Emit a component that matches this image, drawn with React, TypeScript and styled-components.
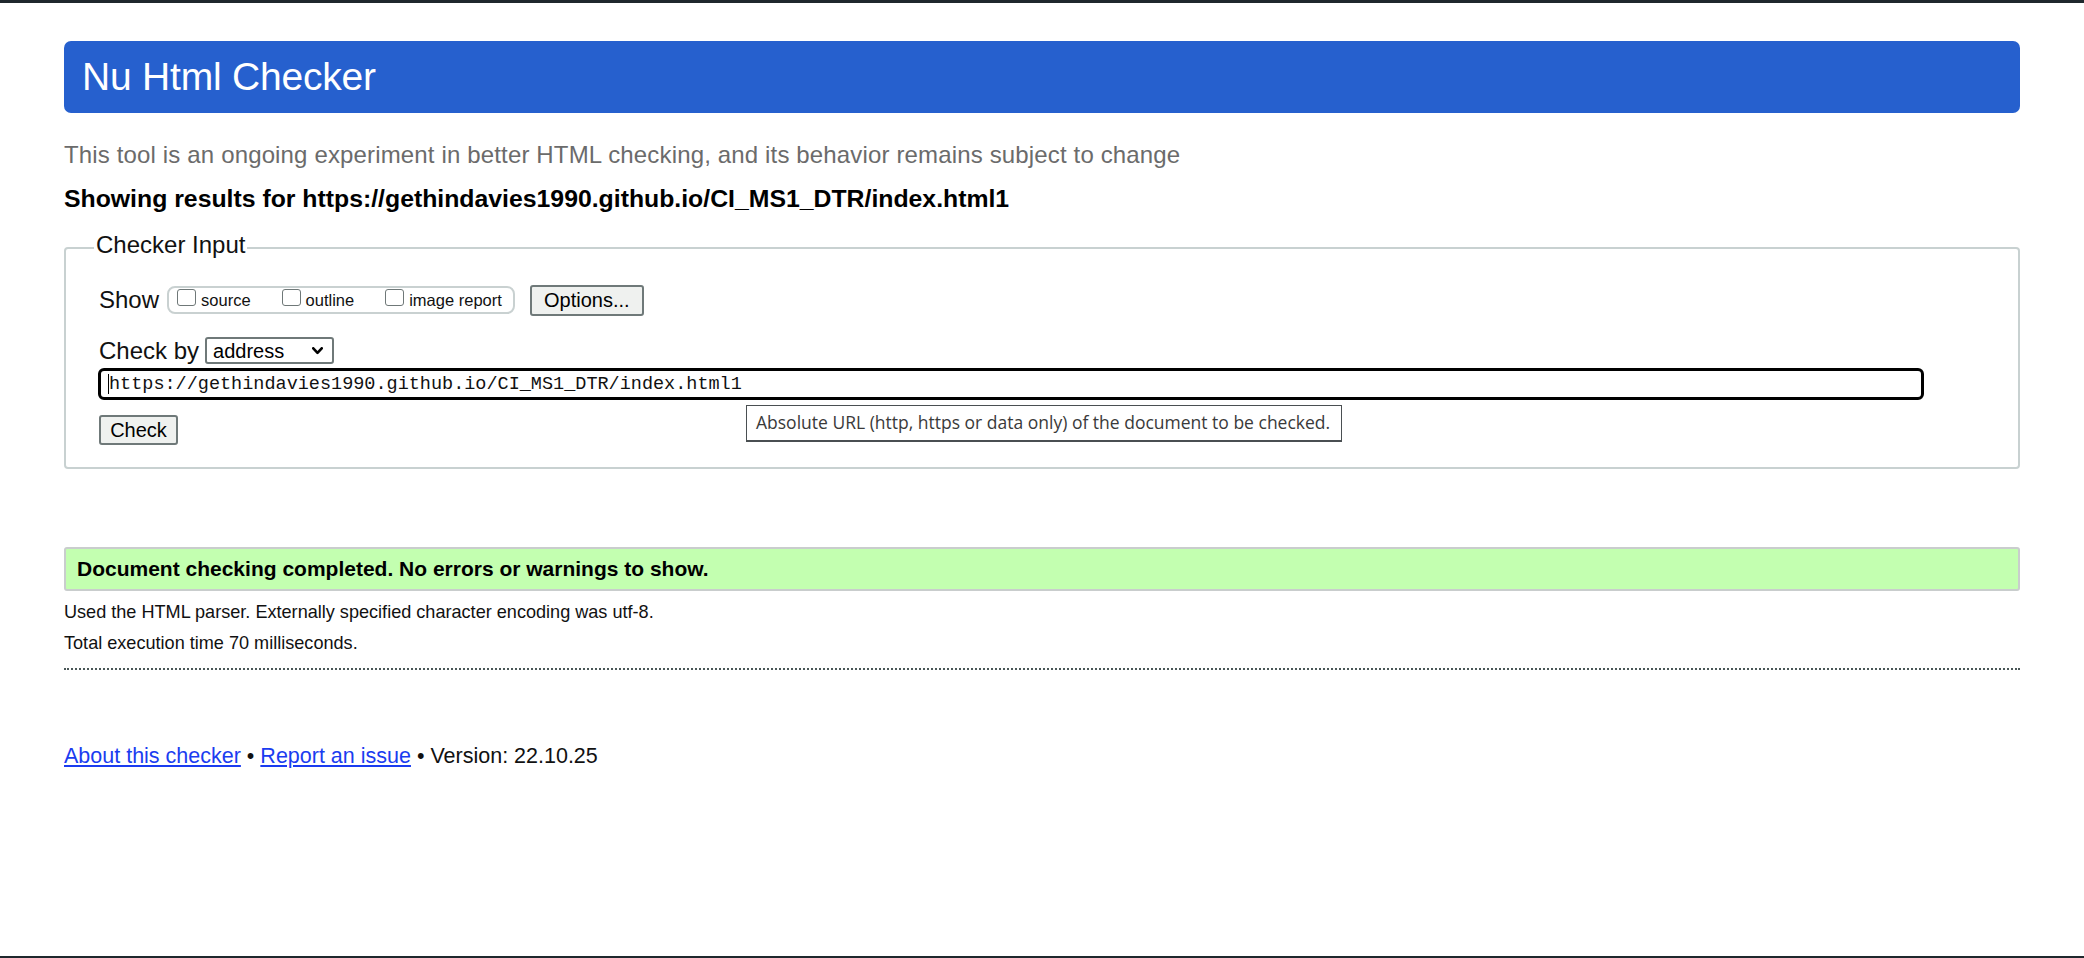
import React from "react";
import styled, { createGlobalStyle } from "styled-components";

const GlobalStyle = createGlobalStyle`
  html, body { margin: 0; padding: 0; background: #ffffff; }
  body { font-family: "Liberation Sans", Arial, sans-serif; color: #000; }
  * { box-sizing: border-box; }
`;

const Page = styled.div`
  height: 958px;
  border-top: 3px solid #1f282d;
  border-bottom: 2px solid #1f282d;
  overflow: hidden;
`;

const Main = styled.main`
  padding: 0 64px;
`;

const Header = styled.header`
  margin-top: 38px;
  height: 72px;
  border-radius: 7px;
  background: #2660ce;
  padding-left: 18px;
`;

const Title = styled.h1`
  margin: 0;
  font-size: 39px;
  font-weight: normal;
  line-height: 72px;
  letter-spacing: -0.2px;
  color: #ffffff;
`;

const Description = styled.p`
  margin: 27px 0 0;
  font-size: 24px;
  line-height: 30px;
  letter-spacing: 0.15px;
  color: #6b6b6b;
`;

const ResultsFor = styled.p`
  margin: 14px 0 0;
  font-size: 24.8px;
  font-weight: bold;
  line-height: 30px;
  color: #000;
`;

const Fieldset = styled.fieldset`
  margin: 17px 0 0;
  padding: 0 33px 22px 33px;
  border: 2px solid #c8d1d1;
  border-radius: 4px;
  min-inline-size: 0;
`;

const Legend = styled.legend`
  margin-left: -5px;
  padding: 0 2px 6px;
  font-size: 24px;
  line-height: 28px;
  color: #111;
`;

const Row = styled.div<{ $top: number; $height: number }>`
  display: flex;
  align-items: center;
  margin-top: ${(p) => p.$top}px;
  height: ${(p) => p.$height}px;
`;

const FieldLabel = styled.span<{ $gap: number }>`
  font-size: 24px;
  color: #111;
  margin-right: ${(p) => p.$gap}px;
  white-space: nowrap;
`;

const OptionGroup = styled.div`
  display: flex;
  align-items: flex-start;
  gap: 31px;
  height: 28px;
  padding: 0 11px 0 8px;
  border: 2px solid #c9d1d1;
  border-radius: 8px;
`;

const OptionLabel = styled.label`
  display: flex;
  align-items: flex-start;
`;

const CheckBox = styled.input`
  appearance: none;
  -webkit-appearance: none;
  margin: 1px 0 0;
  width: 19px;
  height: 17px;
  border: 1.5px solid #6f7878;
  border-radius: 3px;
  background: #fff;
`;

const OptionText = styled.span`
  margin: 4px 0 0 5px;
  font-size: 16.5px;
  line-height: 17px;
  color: #111;
  white-space: nowrap;
`;

const Button = styled.button<{ $width: number; $height: number; $left?: number }>`
  width: ${(p) => p.$width}px;
  height: ${(p) => p.$height}px;
  margin-left: ${(p) => p.$left ?? 0}px;
  padding: 0;
  background: #eff1ef;
  border: 2px solid #6f7979;
  border-radius: 3px;
  font-family: "Liberation Sans", Arial, sans-serif;
  font-size: 20px;
  color: #000;
`;

const SelectBox = styled.div`
  display: flex;
  align-items: center;
  width: 129px;
  height: 27px;
  border: 2px solid #6f7979;
  border-radius: 3px;
  background: #fff;
  padding: 0 9px 0 6px;
`;

const Select = styled.select`
  appearance: none;
  -webkit-appearance: none;
  flex: 1;
  min-width: 0;
  border: none;
  outline: none;
  background: transparent;
  padding: 0;
  font-family: "Liberation Sans", Arial, sans-serif;
  font-size: 20px;
  color: #000;
`;

const InputRow = styled.div`
  position: relative;
  margin-top: 4px;
`;

const InputFrame = styled.div`
  display: flex;
  align-items: center;
  width: 1826px;
  height: 32px;
  margin-left: -1px;
  padding-left: 7px;
  border: 3px solid #000;
  border-radius: 6px;
  background: #fff;
`;

const Caret = styled.span`
  width: 1px;
  height: 20px;
  background: #000;
`;

const UrlInput = styled.input`
  flex: 1;
  min-width: 0;
  border: none;
  outline: none;
  padding: 0;
  background: transparent;
  font-family: "Liberation Mono", "DejaVu Sans Mono", monospace;
  font-size: 18.5px;
  color: #111;
`;

const Tooltip = styled.div`
  position: absolute;
  left: 647px;
  top: 37px;
  width: 596px;
  height: 37px;
  padding: 0 9px;
  background: #fff;
  border: 1px solid #4a4f52;
  border-bottom-width: 2px;
  font-family: "Open Sans", "Noto Sans", sans-serif;
  font-size: 17.5px;
  line-height: 33px;
  color: #3a3a3a;
  white-space: nowrap;
`;

const ButtonRow = styled.div`
  margin-top: 15px;
  display: flex;
`;

const Status = styled.div`
  margin-top: 78px;
  height: 44px;
  padding-left: 11px;
  background: #c3ffb0;
  border: 2px solid #c9cdcd;
  border-radius: 3px;
  font-size: 21px;
  font-weight: bold;
  line-height: 40px;
  color: #000;
`;

const Details = styled.div`
  margin-top: 6px;
`;

const DetailLine = styled.p`
  margin: 0;
  font-size: 18.1px;
  line-height: 31px;
  color: #111;
`;

const DottedRule = styled.hr`
  margin: 9px 0 0;
  border: none;
  border-top: 2px dotted #4a5757;
  height: 0;
`;

const Footer = styled.footer`
  margin-top: 71px;
  font-size: 21.5px;
  line-height: 30px;
  color: #111;
`;

const FooterLink = styled.a`
  color: #1a3cf0;
  text-decoration: underline;
`;

const Chevron = () => (
  <svg width="11" height="8" viewBox="0 0 11 8" aria-hidden="true">
    <polyline
      points="1.3,1.3 5.5,5.8 9.7,1.3"
      fill="none"
      stroke="#000"
      strokeWidth="2.6"
      strokeLinecap="round"
      strokeLinejoin="round"
    />
  </svg>
);

const options = ["source", "outline", "image report"];
const url = "https://gethindavies1990.github.io/CI_MS1_DTR/index.html1";

export default function App() {
  return (
    <>
      <GlobalStyle />
      <Page>
        <Main>
          <Header>
            <Title>Nu Html Checker</Title>
          </Header>
          <Description>
            This tool is an ongoing experiment in better HTML checking, and its behavior remains subject to change
          </Description>
          <ResultsFor>Showing results for {url}</ResultsFor>

          <Fieldset>
            <Legend>Checker Input</Legend>
            <Row $top={19} $height={32}>
              <FieldLabel $gap={8}>Show</FieldLabel>
              <OptionGroup>
                {options.map((o) => (
                  <OptionLabel key={o}>
                    <CheckBox type="checkbox" />
                    <OptionText>{o}</OptionText>
                  </OptionLabel>
                ))}
              </OptionGroup>
              <Button type="button" $width={114} $height={31} $left={15}>
                Options...
              </Button>
            </Row>
            <Row $top={21} $height={27}>
              <FieldLabel $gap={6}>Check by</FieldLabel>
              <SelectBox>
                <Select defaultValue="address">
                  <option value="address">address</option>
                  <option value="file">file upload</option>
                  <option value="text">text input</option>
                </Select>
                <Chevron />
              </SelectBox>
            </Row>
            <InputRow>
              <InputFrame>
                <Caret />
                <UrlInput type="url" readOnly value={url} />
              </InputFrame>
              <Tooltip>Absolute URL (http, https or data only) of the document to be checked.</Tooltip>
            </InputRow>
            <ButtonRow>
              <Button type="button" $width={79} $height={30}>
                Check
              </Button>
            </ButtonRow>
          </Fieldset>

          <Status>Document checking completed. No errors or warnings to show.</Status>
          <Details>
            <DetailLine>Used the HTML parser. Externally specified character encoding was utf-8.</DetailLine>
            <DetailLine>Total execution time 70 milliseconds.</DetailLine>
          </Details>
          <DottedRule />
          <Footer>
            <FooterLink href="#about">About this checker</FooterLink> • <FooterLink href="#issue">Report an issue</FooterLink> •
            Version: 22.10.25
          </Footer>
        </Main>
      </Page>
    </>
  );
}
